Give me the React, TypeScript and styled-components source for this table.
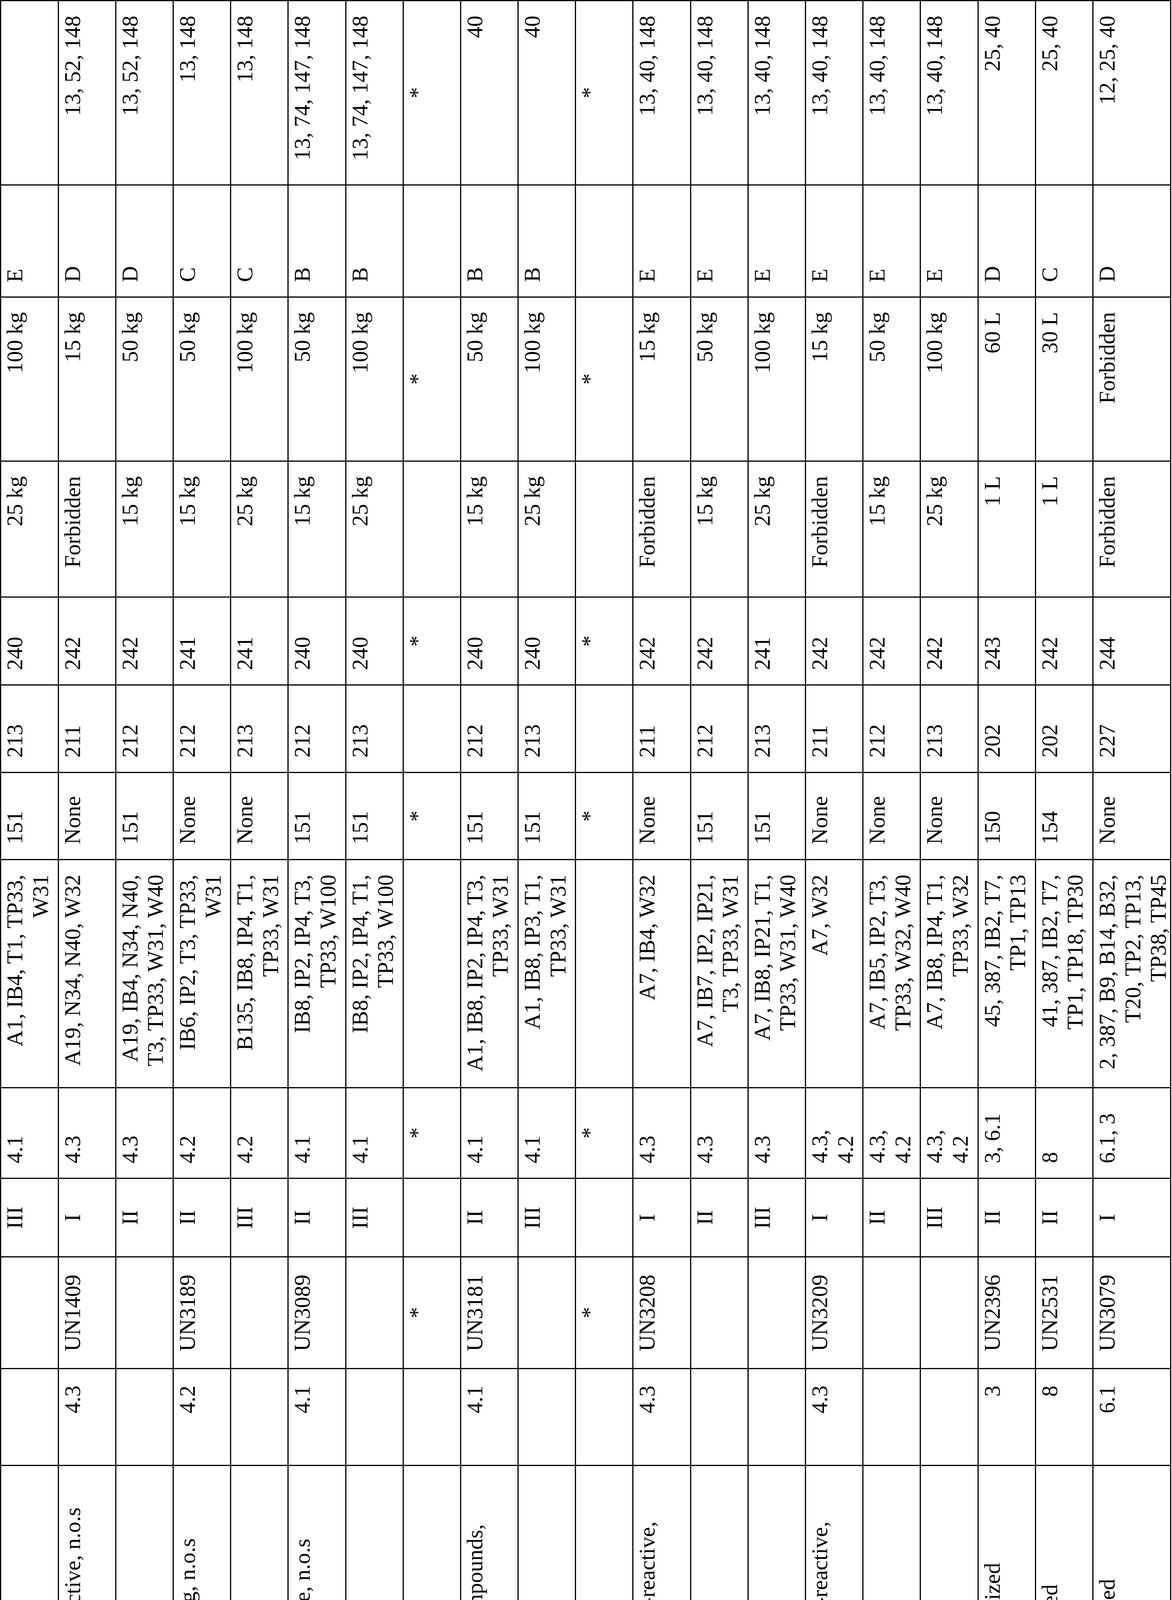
import React from 'react';
import styled, { createGlobalStyle } from 'styled-components';

type Align = 'start' | 'center' | 'end';

const GlobalStyle = createGlobalStyle`
  html, body {
    margin: 0;
    padding: 0;
    background: #ffffff;
  }
`;

const Frame = styled.div`
  width: 3001px;
  height: 5333px;
  overflow: hidden;
  background: #ffffff;
`;

// the page is a landscape table printed sideways: lines run bottom to top
// and rows follow each other from left to right
const Sheet = styled.div`
  box-sizing: border-box;
  writing-mode: sideways-lr;
  width: 3001px;
  height: 5333px;
  padding-block-start: 0.4px;
  padding-inline-start: 3.6px;
  font-family: "Liberation Serif", "Times New Roman", serif;
  font-size: 57px;
  line-height: 1.15;
  color: #000000;

  @supports not (writing-mode: sideways-lr) {
    writing-mode: horizontal-tb;
    width: 5333px;
    height: 3001px;
    transform-origin: 0 0;
    transform: translateY(5333px) rotate(-90deg);
  }
`;

const Table = styled.div`
  display: flex;
  flex-direction: column;
  inline-size: max-content;
  border-inline-end: 3px solid #000000;
  border-block-end: 3px solid #000000;
`;

const Row = styled.div<{ $size: number }>`
  display: grid;
  grid-template-columns: 601.5px 974.5px 248.5px 285.5px 201.5px 231.5px 584.5px 222.5px 224px 225px 348.5px 419.5px 287.5px 471.5px;
  block-size: ${p => p.$size}px;
`;

const Cell = styled.div<{ $align: Align; $inset: number }>`
  box-sizing: border-box;
  border-inline-start: 3px solid #000000;
  border-block-start: 3px solid #000000;
  padding-block-start: 2px;
  padding-inline-start: 37px;
  padding-inline-end: ${p => p.$inset}px;
  text-align: ${p => p.$align};
  white-space: nowrap;
`;

const Line = styled.span`
  display: block;
`;

const COLUMNS: { align: Align; inset: number }[] = [
  { align: 'center', inset: 37 }, // symbols
  { align: 'start', inset: 37 }, // description
  { align: 'end', inset: 42 }, // hazard class
  { align: 'center', inset: 37 }, // id number
  { align: 'center', inset: 37 }, // packing group
  { align: 'start', inset: 37 }, // label codes
  { align: 'end', inset: 37 }, // special provisions
  { align: 'start', inset: 37 }, // exceptions
  { align: 'start', inset: 37 }, // non-bulk
  { align: 'start', inset: 37 }, // bulk
  { align: 'end', inset: 37 }, // passenger
  { align: 'end', inset: 37 }, // cargo
  { align: 'start', inset: 37 }, // vessel location
  { align: 'end', inset: 37 }, // vessel other
];

const STAR = ['', '*', '', '*', '', '*', '', '*', '', '*', '', '*', '', '*'];

const ROWS: string[][] = [
  ['', '', '', '', 'III', '4.1', 'A1, IB4, T1, TP33,\nW31', '151', '213', '240', '25 kg', '100 kg', 'E', ''],
  ['', 'Metal hydrides, water reactive, n.o.s', '4.3', 'UN1409', 'I', '4.3', 'A19, N34, N40, W32', 'None', '211', '242', 'Forbidden', '15 kg', 'D', '13, 52, 148'],
  ['', '', '', '', 'II', '4.3', 'A19, IB4, N34, N40,\nT3, TP33, W31, W40', '151', '212', '242', '15 kg', '50 kg', 'D', '13, 52, 148'],
  ['', 'Metal powder, self-heating, n.o.s', '4.2', 'UN3189', 'II', '4.2', 'IB6, IP2, T3, TP33,\nW31', 'None', '212', '241', '15 kg', '50 kg', 'C', '13, 148'],
  ['', '', '', '', 'III', '4.2', 'B135, IB8, IP4, T1,\nTP33, W31', 'None', '213', '241', '25 kg', '100 kg', 'C', '13, 148'],
  ['', 'Metal powders, flammable, n.o.s', '4.1', 'UN3089', 'II', '4.1', 'IB8, IP2, IP4, T3,\nTP33, W100', '151', '212', '240', '15 kg', '50 kg', 'B', '13, 74, 147, 148'],
  ['', '', '', '', 'III', '4.1', 'IB8, IP2, IP4, T1,\nTP33, W100', '151', '213', '240', '25 kg', '100 kg', 'B', '13, 74, 147, 148'],
  STAR,
  ['G', 'Metal salts of organic compounds,\nflammable, n.o.s.', '4.1', 'UN3181', 'II', '4.1', 'A1, IB8, IP2, IP4, T3,\nTP33, W31', '151', '212', '240', '15 kg', '50 kg', 'B', '40'],
  ['', '', '', '', 'III', '4.1', 'A1, IB8, IP3, T1,\nTP33, W31', '151', '213', '240', '25 kg', '100 kg', 'B', '40'],
  STAR,
  ['G', 'Metallic substance, water-reactive,\nn.o.s', '4.3', 'UN3208', 'I', '4.3', 'A7, IB4, W32', 'None', '211', '242', 'Forbidden', '15 kg', 'E', '13, 40, 148'],
  ['', '', '', '', 'II', '4.3', 'A7, IB7, IP2, IP21,\nT3, TP33, W31', '151', '212', '242', '15 kg', '50 kg', 'E', '13, 40, 148'],
  ['', '', '', '', 'III', '4.3', 'A7, IB8, IP21, T1,\nTP33, W31, W40', '151', '213', '241', '25 kg', '100 kg', 'E', '13, 40, 148'],
  ['G', 'Metallic substance, water-reactive,\nself-heating, n.o.s', '4.3', 'UN3209', 'I', '4.3,\n4.2', 'A7, W32', 'None', '211', '242', 'Forbidden', '15 kg', 'E', '13, 40, 148'],
  ['', '', '', '', 'II', '4.3,\n4.2', 'A7, IB5, IP2, T3,\nTP33, W32, W40', 'None', '212', '242', '15 kg', '50 kg', 'E', '13, 40, 148'],
  ['', '', '', '', 'III', '4.3,\n4.2', 'A7, IB8, IP4, T1,\nTP33, W32', 'None', '213', '242', '25 kg', '100 kg', 'E', '13, 40, 148'],
  ['', 'Methacrylaldehyde, stabilized', '3', 'UN2396', 'II', '3, 6.1', '45, 387, IB2, T7,\nTP1, TP13', '150', '202', '243', '1 L', '60 L', 'D', '25, 40'],
  ['', 'Methacrylic acid, stabilized', '8', 'UN2531', 'II', '8', '41, 387, IB2, T7,\nTP1, TP18, TP30', '154', '202', '242', '1 L', '30 L', 'C', '25, 40'],
  ['+', 'Methacrylonitrile, stabilized', '6.1', 'UN3079', 'I', '6.1, 3', '2, 387, B9, B14, B32,\nT20, TP2, TP13,\nTP38, TP45', 'None', '227', '244', 'Forbidden', 'Forbidden', 'D', '12, 25, 40'],
];

const App: React.FC = () => {
  return (
    <React.Fragment>
      <GlobalStyle />
      <Frame>
        <Sheet>
          <Table>
            {ROWS.map((cells, r) => (
              <Row key={r} $size={r === ROWS.length - 1 ? 199.2 : 147.2}>
                {cells.map((value, c) => {
                  const col = COLUMNS[c];
                  const star = value === '*';
                  return (
                    <Cell key={c} $align={star ? 'center' : col.align} $inset={star ? 37 : col.inset}>
                      {value.split('\n').map((line, i) => (
                        <Line key={i}>{line}</Line>
                      ))}
                    </Cell>
                  );
                })}
              </Row>
            ))}
          </Table>
        </Sheet>
      </Frame>
    </React.Fragment>
  );
};

export default App;
